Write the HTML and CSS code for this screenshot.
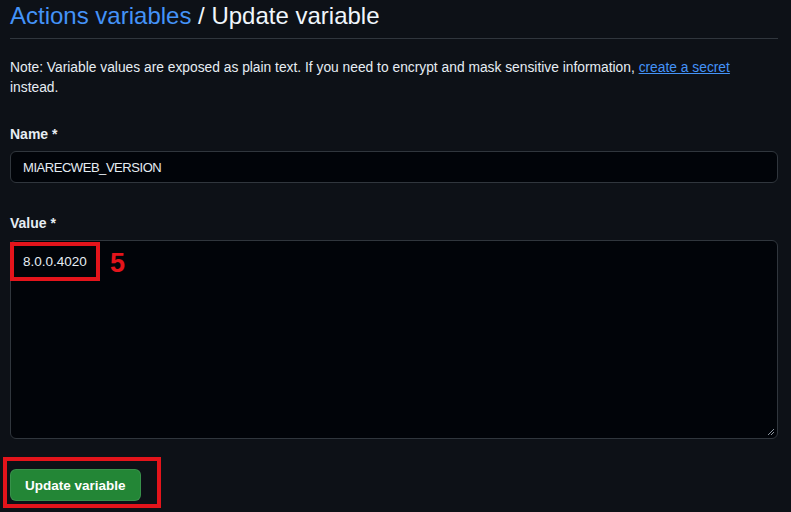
FILE: index.html
```html
<!DOCTYPE html>
<html>
<head>
<meta charset="utf-8">
<link rel="stylesheet" href="styles.css">
</head>
<body>
<main class="page">
  <h1 class="title"><a class="crumb" href="#">Actions variables</a> / Update variable</h1>
  <p class="note">Note: Variable values are exposed as plain text. If you need to encrypt and mask sensitive information, <a class="link" href="#">create a secret</a> instead.</p>
  <form class="form">
    <div class="field">
      <label class="label">Name *</label>
      <div class="input">MIARECWEB_VERSION</div>
    </div>
    <div class="field field-value">
      <label class="label">Value *</label>
      <div class="textarea">
        <span class="value">8.0.0.4020</span>
        <span class="mark-box"></span>
        <span class="mark-num">5</span>
        <svg class="grip" width="8" height="8" viewBox="0 0 8 8"><path d="M7 1L1 7M7 4L4 7" stroke="#8b949e" stroke-width="1"/></svg>
      </div>
    </div>
    <div class="actions">
      <button type="button" class="btn">Update variable</button>
      <span class="btn-mark"></span>
    </div>
  </form>
</main>
</body>
</html>
```

FILE: styles.css
```css
* { box-sizing: border-box; }
html, body { margin: 0; padding: 0; background: #0d1117; }
body {
  font-family: "Liberation Sans", Arial, sans-serif;
  color: #e6edf3;
  font-size: 14px;
  width: 791px;
  height: 512px;
  overflow: hidden;
}
.page { padding: 0 13px 0 10px; }
.title {
  margin: 0;
  font-weight: 400;
  font-size: 24px;
  line-height: 30px;
  padding-top: 1px;
  padding-bottom: 7px;
  border-bottom: 1px solid #30363d;
  color: #f0f6fc;
}
.crumb { color: #4493f8; text-decoration: none; }
.note { margin: 19px 0 0; line-height: 20px; font-size: 13.8px; color: #e6edf3; }
.link { color: #4493f8; text-decoration: underline; }
.form { margin-top: 26px; }
.field { display: flex; flex-direction: column; }
.field-value { margin-top: 30px; }
.label { font-weight: 700; font-size: 14px; line-height: 20px; margin-bottom: 7px; }
.input {
  height: 32px;
  border: 1px solid #30363d;
  border-radius: 6px;
  background: #010409;
  padding: 0 12px;
  display: flex;
  align-items: center;
  font-size: 13px;
  letter-spacing: -0.45px;
}
.textarea {
  position: relative;
  height: 199px;
  border: 1px solid #30363d;
  border-radius: 6px;
  background: #010409;
  padding: 8px 12px;
  font-size: 13.5px;
  line-height: 20px;
}
.value { display: inline-block; padding-top: 3px; }
.mark-box {
  position: absolute;
  left: -1px; top: 1px;
  width: 90px; height: 39px;
  border: 4px solid #e3141b;
}
.mark-num {
  position: absolute;
  left: 99px; top: 7px;
  color: #e3141b;
  font-weight: 700;
  font-size: 27px;
  line-height: 30px;
  font-family: "Liberation Sans Narrow", "Liberation Sans", sans-serif;
}
.grip { position: absolute; right: 2px; bottom: 2px; }
.actions { position: relative; margin-top: 30px; }
.btn {
  height: 32px;
  padding: 0 14px;
  border: 1px solid rgba(240,246,252,0.1);
  border-radius: 6px;
  background: #238636;
  color: #ffffff;
  font-family: inherit;
  font-weight: 700;
  font-size: 13.5px;
}
.btn-mark {
  position: absolute;
  left: -7px; top: -12px;
  width: 158px; height: 51px;
  border: 4px solid #e3141b;
}
```
